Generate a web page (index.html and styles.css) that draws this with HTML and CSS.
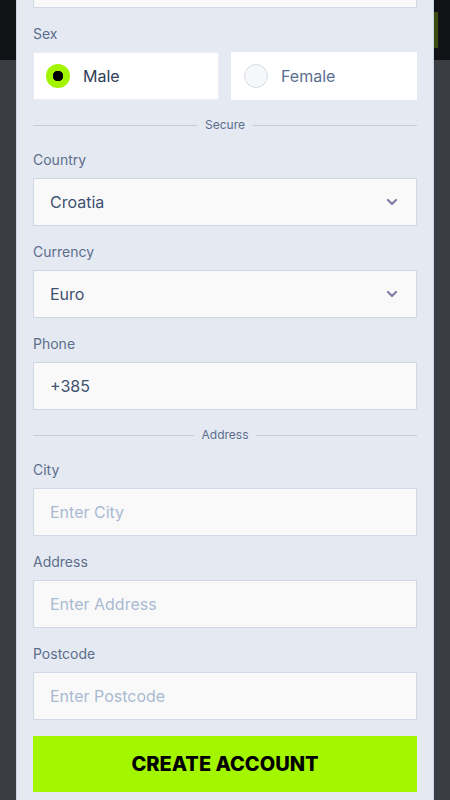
FILE: index.html
```html
<!DOCTYPE html>
<html lang="en">
<head>
<meta charset="utf-8">
<title>Register</title>
<link rel="stylesheet" href="styles.css">
</head>
<body>
<header class="topbar">
  <div class="topbar-btn"></div>
</header>
<main class="page"></main>

<div class="overlay">
  <form class="modal">
    <div class="field field-cut">
      <div class="input"><span class="placeholder">&nbsp;</span></div>
    </div>

    <div class="field">
      <div class="label">Sex</div>
      <div class="sex-row">
        <label class="sex-card sex-card-active">
          <span class="radio radio-on"></span>
          <span class="sex-text sex-text-on">Male</span>
        </label>
        <label class="sex-card">
          <span class="radio"></span>
          <span class="sex-text">Female</span>
        </label>
      </div>
    </div>

    <div class="divider"><span>Secure</span></div>

    <div class="field">
      <div class="label">Country</div>
      <div class="input select">
        <span class="value">Croatia</span>
        <svg class="chev" width="12" height="8" viewBox="0 0 12 8"><path d="M2 2l4 4 4-4" fill="none" stroke="#7f7fa6" stroke-width="2.2" stroke-linecap="round" stroke-linejoin="round"/></svg>
      </div>
    </div>

    <div class="field">
      <div class="label">Currency</div>
      <div class="input select">
        <span class="value">Euro</span>
        <svg class="chev" width="12" height="8" viewBox="0 0 12 8"><path d="M2 2l4 4 4-4" fill="none" stroke="#7f7fa6" stroke-width="2.2" stroke-linecap="round" stroke-linejoin="round"/></svg>
      </div>
    </div>

    <div class="field">
      <div class="label">Phone</div>
      <div class="input"><span class="value">+385</span></div>
    </div>

    <div class="divider"><span>Address</span></div>

    <div class="field">
      <div class="label">City</div>
      <div class="input"><span class="placeholder">Enter City</span></div>
    </div>

    <div class="field">
      <div class="label">Address</div>
      <div class="input"><span class="placeholder">Enter Address</span></div>
    </div>

    <div class="field">
      <div class="label">Postcode</div>
      <div class="input"><span class="placeholder">Enter Postcode</span></div>
    </div>

    <button type="button" class="submit">CREATE ACCOUNT</button>
  </form>
</div>
</body>
</html>
```

FILE: styles.css
```css
* { box-sizing: border-box; }
html, body {
  margin: 0;
  padding: 0;
  height: 100%;
}
body {
  background: #3a3e43;
  font-family: Inter, "Noto Sans", sans-serif;
  overflow: hidden;
}
.topbar {
  height: 60px;
  background: #101215;
  display: flex;
  justify-content: flex-end;
  align-items: center;
  padding-right: 12px;
}
.topbar-btn {
  width: 80px;
  height: 36px;
  background: #3a4a10;
}
.overlay {
  position: fixed;
  inset: 0;
  overflow: hidden;
}
.modal {
  margin: -40px 16px 0;
  background: #e4e9f2;
  border-left: 1px solid #c9d2e2;
  border-right: 1px solid #c9d2e2;
  padding: 0 16px 24px;
  display: flex;
  flex-direction: column;
  gap: 16px;
}
.field {
  display: flex;
  flex-direction: column;
  gap: 8px;
}
.label {
  font-size: 14px;
  line-height: 20px;
  color: #5d6e8c;
}
.input {
  height: 48px;
  background: #f9f9f9;
  border: 1px solid #d0d8e6;
  display: flex;
  align-items: center;
  padding: 0 16px;
  font-size: 16px;
}
.select {
  justify-content: space-between;
  padding-right: 18px;
}
.value { color: #3e5171; }
.placeholder { color: #a9bad2; }
.chev { display: block; }

.sex-row {
  display: grid;
  grid-template-columns: 1fr 1fr;
  gap: 12px;
}
.sex-card {
  height: 48px;
  background: #ffffff;
  display: flex;
  align-items: center;
  gap: 13px;
  padding: 0 13px;
}
.sex-card-active {
  border: 1px solid #e8ecf4;
  padding: 0 12px;
}
.radio {
  width: 24px;
  height: 24px;
  border-radius: 50%;
  background: #f6f7f9;
  border: 1px solid #d5dbe6;
  flex: none;
}
.radio-on {
  background: radial-gradient(circle, #000 0 5px, #a3f400 5.5px);
  border: none;
}
.sex-text {
  font-size: 16px;
  color: #5a6f90;
}
.sex-text-on { color: #2d3d58; }

.divider {
  display: flex;
  align-items: center;
  gap: 8px;
  font-size: 12px;
  line-height: 18px;
  color: #5d6e8c;
}
.divider::before,
.divider::after {
  content: "";
  flex: 1;
  height: 1px;
  background: #c3cddc;
}
.submit {
  height: 56px;
  border: none;
  background: #a4f500;
  color: #000;
  font-family: Inter, "Noto Sans", sans-serif;
  font-weight: 800;
  font-size: 20px;
  letter-spacing: 0;
  cursor: pointer;
}
```
